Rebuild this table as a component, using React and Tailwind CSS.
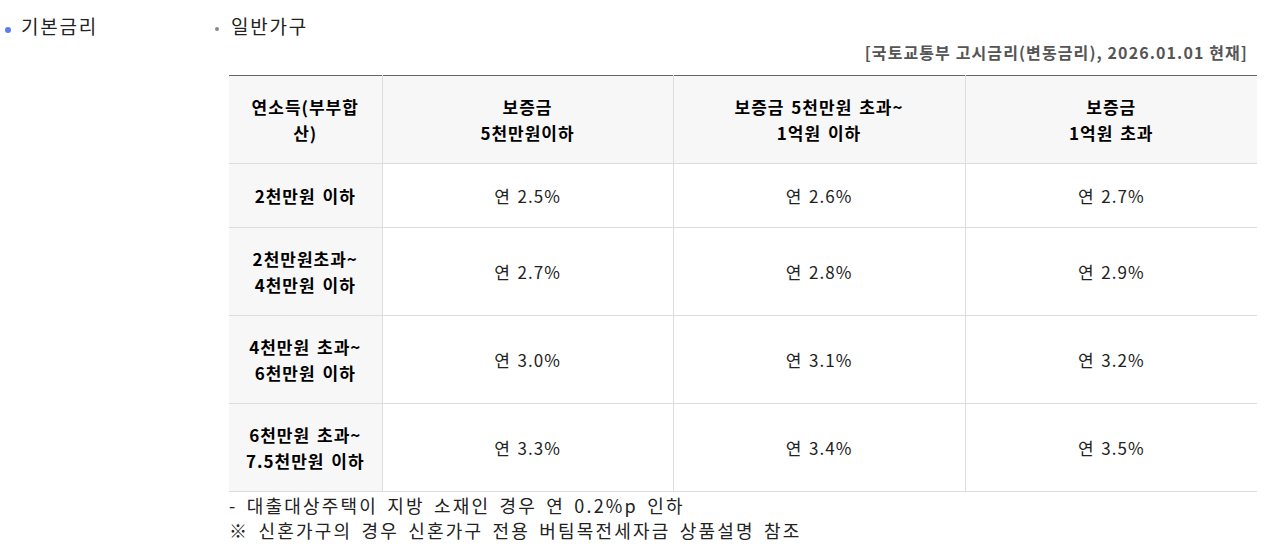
import React from 'react';

const rows = [
  { label: ['2천만원 이하'], rates: ['연 2.5%', '연 2.6%', '연 2.7%'] },
  { label: ['2천만원초과~', '4천만원 이하'], rates: ['연 2.7%', '연 2.8%', '연 2.9%'] },
  { label: ['4천만원 초과~', '6천만원 이하'], rates: ['연 3.0%', '연 3.1%', '연 3.2%'] },
  { label: ['6천만원 초과~', '7.5천만원 이하'], rates: ['연 3.3%', '연 3.4%', '연 3.5%'] },
];

const headers = [
  ['연소득(부부합', '산)'],
  ['보증금', '5천만원이하'],
  ['보증금 5천만원 초과~', '1억원 이하'],
  ['보증금', '1억원 초과'],
];

export default function App() {
  return (
    <div className="flex bg-white text-black min-h-[551px]" style={{ fontFamily: '"Noto Sans CJK KR", "Noto Sans", sans-serif' }}>
      <div className="w-[213px] shrink-0 pt-[13px] pl-[5px] flex items-start">
        <span className="mt-[14px] w-[6px] h-[6px] rounded-full bg-[#5b7cf0]" />
        <span className="ml-[10px] text-[19px] leading-[26px] tracking-[1.8px] text-[#222]">기본금리</span>
      </div>
      <div className="w-[1044px] pt-[13px]">
        <div className="flex items-start">
          <span className="mt-[14px] ml-[2px] w-[4px] h-[4px] rounded-full bg-[#888]" />
          <span className="ml-[12px] text-[19px] leading-[26px] tracking-[1.8px] text-[#222]">일반가구</span>
        </div>
        <div className="pl-[16px]">
          <p className="text-right pr-[9px] text-[16px] leading-[22px] font-bold tracking-[1.1px] text-[#555] mt-[2px]">
            [국토교통부 고시금리(변동금리), 2026.01.01 현재]
          </p>
          <table className="mt-[12px] w-[1028px] border-collapse table-fixed text-[17px] leading-[26px] tracking-[1px] [word-spacing:2px] border-t border-t-[#666] border-b border-b-[#ccc]">
            <colgroup>
              <col className="w-[153px]" />
              <col className="w-[291px]" />
              <col className="w-[292px]" />
              <col className="w-[292px]" />
            </colgroup>
            <thead>
              <tr className="bg-[#f7f7f7] h-[88px]">
                {headers.map((h, i) => (
                  <th key={i} className={`font-bold text-center align-middle border-b border-[#ddd] ${i > 0 ? 'border-l' : ''} px-1`}>
                    {h[0]}
                    <br />
                    {h[1]}
                  </th>
                ))}
              </tr>
            </thead>
            <tbody>
              {rows.map((r, i) => (
                <tr key={i} className={r.label.length > 1 ? 'h-[88px]' : 'h-[64px]'}>
                  <th className="bg-[#f7f7f7] font-bold text-center border-b border-[#ddd] px-1">
                    {r.label.map((l, j) => (
                      <div key={j}>{l}</div>
                    ))}
                  </th>
                  {r.rates.map((v, j) => (
                    <td key={j} className="text-center border-b border-l border-[#ddd] text-[#222]">
                      {v}
                    </td>
                  ))}
                </tr>
              ))}
            </tbody>
          </table>
          <div className="text-[18px] leading-[25px] tracking-[2.2px] [word-spacing:3px] text-[#222] mt-[1px]">
            <p>- 대출대상주택이 지방 소재인 경우 연 0.2%p 인하</p>
            <p>※ 신혼가구의 경우 신혼가구 전용 버팀목전세자금 상품설명 참조</p>
          </div>
        </div>
      </div>
    </div>
  );
}
